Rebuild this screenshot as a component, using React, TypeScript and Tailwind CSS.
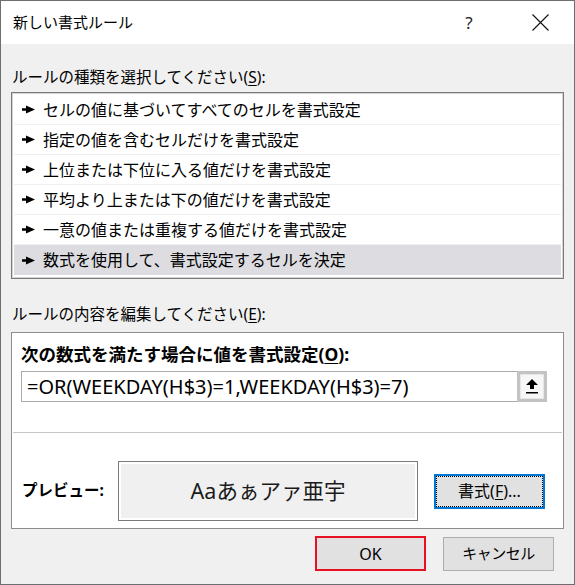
import React from "react";

const items = [
  "セルの値に基づいてすべてのセルを書式設定",
  "指定の値を含むセルだけを書式設定",
  "上位または下位に入る値だけを書式設定",
  "平均より上または下の値だけを書式設定",
  "一意の値または重複する値だけを書式設定",
  "数式を使用して、書式設定するセルを決定",
];

function Pointer() {
  return (
    <svg width="13" height="9" viewBox="0 0 13 9" className="shrink-0">
      <rect x="0" y="3.25" width="5" height="2.5" fill="#000" />
      <path d="M4 0.5 L13 4.5 L4 8.5 Z" fill="#000" />
    </svg>
  );
}

export default function App() {
  return (
    <div className="w-[575px] h-[585px] border border-[#6e6e6e] bg-[#f0f0f0] flex flex-col overflow-hidden text-black font-[family-name:'Noto_Sans','Noto_Sans_CJK_JP',sans-serif]">
      {/* title bar */}
      <div className="h-[43px] bg-white flex items-center pl-[12px] shrink-0">
        <span className="text-[15px] leading-none">新しい書式ルール</span>
        <span className="ml-auto w-[20px] text-center text-[17px] leading-none text-[#222]">?</span>
        <span className="ml-[51px] w-[20px] flex justify-center">
          <svg width="17" height="17" viewBox="0 0 17 17">
            <path d="M0.5 0.5 L16.5 16.5 M16.5 0.5 L0.5 16.5" stroke="#111" strokeWidth="1.1" />
          </svg>
        </span>
        <div className="w-[24px]" />
      </div>

      <div className="px-[10px] flex flex-col">
        <div className="mt-[23px] h-[20px] leading-[20px] text-[15.5px] pl-[1px]">
          ルールの種類を選択してください(<span className="underline underline-offset-2">S</span>):
        </div>

        <div className="mt-[5px] border border-[#7a7a7a] bg-white pt-[2px] pb-[3px] px-[2px] shadow-[inset_0_0_0_1px_#d4d4d4]">
          {items.map((t, i) => (
            <div
              key={i}
              className={
                i === 5
                  ? "h-[30px] flex items-center pl-[8px] gap-[8px] bg-[#dcdce1]"
                  : "h-[30px] flex items-center pl-[8px] gap-[8px] border-b border-[#f0f0f0]"
              }
            >
              <Pointer />
              <span className="text-[16px] leading-none">{t}</span>
            </div>
          ))}
        </div>

        <div className="mt-[25px] h-[20px] leading-[20px] text-[15.5px] pl-[1px]">
          ルールの内容を編集してください(<span className="underline underline-offset-2">E</span>):
        </div>

        <div className="mt-[8px] h-[197px] border border-[#8c8c8c] bg-white flex flex-col">
          <div className="mt-[11px] h-[20px] leading-[20px] pl-[9px] text-[17.5px] font-bold">
            次の数式を満たす場合に値を書式設定(<span className="underline underline-offset-2">O</span>):
          </div>

          <div className="mt-[7px] ml-[9px] w-[526px] h-[31px] flex">
            <div className="flex-1 border border-[#ababab] border-r-0 flex items-center pl-[5px] text-[20px] leading-none">
              =OR(WEEKDAY(H$3)=1,WEEKDAY(H$3)=7)
            </div>
            <div className="w-[30px] h-[31px] border-[3px] border-[#c3c3c3] bg-[#e6e6e6] p-[1px]">
              <div className="w-full h-full bg-[#f7f7f7] flex items-center justify-center">
                <svg width="12" height="15" viewBox="0 0 12 15">
                  <path d="M6 0 L12 6 L8 6 L8 10 L4 10 L4 6 L0 6 Z" fill="#000" />
                  <rect x="0" y="13" width="12" height="1.5" fill="#000" />
                </svg>
              </div>
            </div>
          </div>

          <div className="mt-[30px] mx-[1px] h-px bg-[#c6c6c6]" />

          <div className="mt-[28px] flex items-center pl-[10px]">
            <div className="w-[96px] text-[15.5px] font-bold leading-none">プレビュー:</div>
            <div className="w-[300px] h-[60px] border border-[#7a7a7a] bg-[#f0f0f0] shadow-[inset_0_0_0_2px_#ffffff] flex items-center justify-center text-[21.5px] leading-none text-[#1a1a1a]">
              Aaあぁアァ亜宇
            </div>
            <div className="ml-[16px] w-[111px] h-[35px] border-2 border-[#0078d7] bg-[#e1e1e1]">
              <div className="w-full h-full border border-dotted border-black flex items-center justify-center text-[16px] leading-none">
                書式(<span className="underline underline-offset-2">F</span>)...
              </div>
            </div>
          </div>
        </div>

        <div className="mt-[7px] flex items-center justify-end pr-[10px]">
          <div className="w-[111px] h-[35px] border-2 border-[#e81123] bg-[#e1e1e1] flex items-center justify-center text-[16px] leading-none">
            OK
          </div>
          <div className="ml-[17px] w-[111px] h-[34px] border border-[#adadad] bg-[#e1e1e1] flex items-center justify-center text-[15px] tracking-[-0.5px] leading-none">
            キャンセル
          </div>
        </div>
      </div>
    </div>
  );
}
